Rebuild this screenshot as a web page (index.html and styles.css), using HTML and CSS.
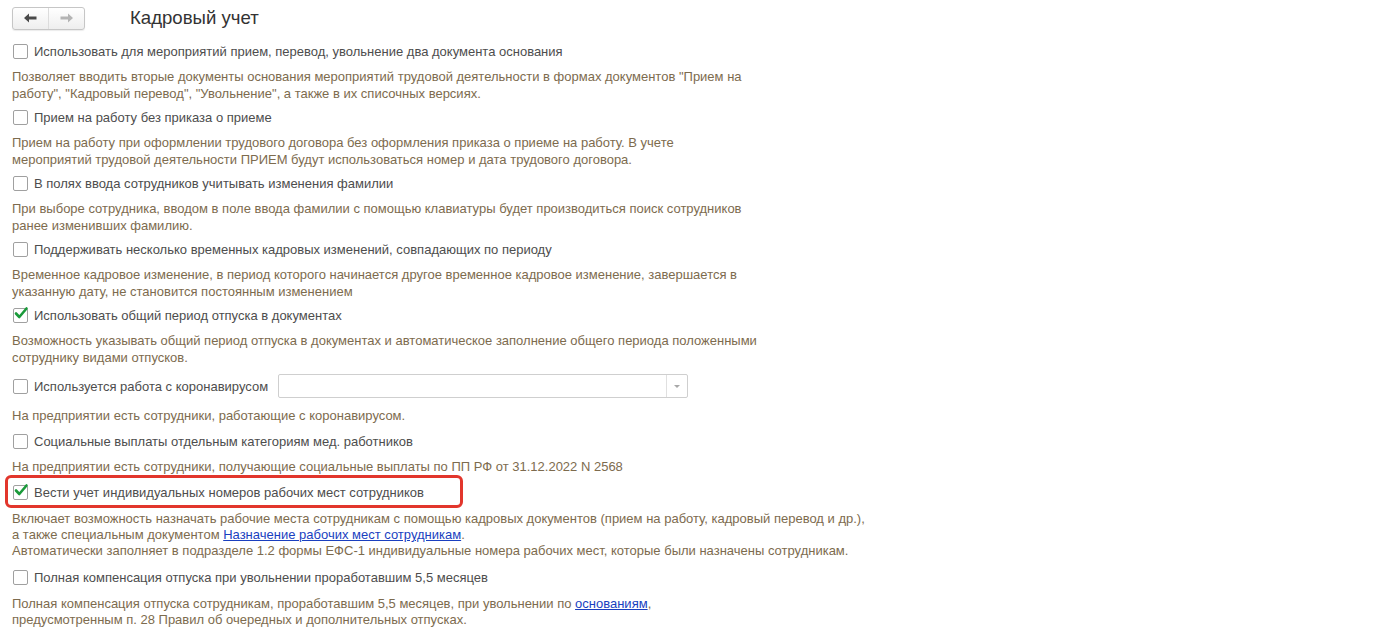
FILE: index.html
```html
<!DOCTYPE html>
<html>
<head>
    <title>Кадровый учет</title>
    <link rel="stylesheet" href="styles.css">
</head>
<body>
    <div class="page">
        <div class="header">
            <div class="nav">
                <button class="nav-btn back" type="button">
                    <svg width="13" height="10" viewBox="0 0 13 10"><path d="M0 5 L5 0.5 L5 3.5 L12.5 3.5 L12.5 6.5 L5 6.5 L5 9.5 Z" fill="#4a4a4a"/></svg>
                </button>
                <button class="nav-btn fwd" type="button">
                    <svg width="13" height="10" viewBox="0 0 13 10"><path d="M13 5 L8 0.5 L8 3.5 L0.5 3.5 L0.5 6.5 L8 6.5 L8 9.5 Z" fill="#b4b4b4"/></svg>
                </button>
            </div>
            <h1>Кадровый учет</h1>
        </div>

        <div class="option">
            <label class="check-row"><span class="box"></span>Использовать для мероприятий прием, перевод, увольнение два документа основания</label>
            <div class="desc">Позволяет вводить вторые документы основания мероприятий трудовой деятельности в формах документов "Прием на<br>работу", "Кадровый перевод", "Увольнение", а также в их списочных версиях.</div>
        </div>

        <div class="option">
            <label class="check-row"><span class="box"></span>Прием на работу без приказа о приеме</label>
            <div class="desc">Прием на работу при оформлении трудового договора без оформления приказа о приеме на работу. В учете<br>мероприятий трудовой деятельности ПРИЕМ будут использоваться номер и дата трудового договора.</div>
        </div>

        <div class="option">
            <label class="check-row"><span class="box"></span>В полях ввода сотрудников учитывать изменения фамилии</label>
            <div class="desc">При выборе сотрудника, вводом в поле ввода фамилии с помощью клавиатуры будет производиться поиск сотрудников<br>ранее изменивших фамилию.</div>
        </div>

        <div class="option">
            <label class="check-row"><span class="box"></span>Поддерживать несколько временных кадровых изменений, совпадающих по периоду</label>
            <div class="desc">Временное кадровое изменение, в период которого начинается другое временное кадровое изменение, завершается в<br>указанную дату, не становится постоянным изменением</div>
        </div>

        <div class="option">
            <label class="check-row"><span class="box checked"><svg width="16" height="16" viewBox="0 0 16 16"><path d="M3 7.5 L6.3 11 L13.5 2.5" fill="none" stroke="#1a9a3a" stroke-width="2.6" stroke-linecap="round" stroke-linejoin="round"/></svg></span>Использовать общий период отпуска в документах</label>
            <div class="desc">Возможность указывать общий период отпуска в документах и автоматическое заполнение общего периода положенными<br>сотруднику видами отпусков.</div>
        </div>

        <div class="option with-combo">
            <div class="check-row tall">
                <label class="check-label"><span class="box"></span>Используется работа с коронавирусом</label>
                <div class="combo">
                    <div class="combo-field"></div>
                    <div class="combo-btn"><span class="tri"></span></div>
                </div>
            </div>
            <div class="desc loose">На предприятии есть сотрудники, работающие с коронавирусом.</div>
        </div>

        <div class="option after-combo">
            <label class="check-row"><span class="box"></span>Социальные выплаты отдельным категориям мед. работников</label>
            <div class="desc">На предприятии есть сотрудники, получающие социальные выплаты по ПП РФ от 31.12.2022 N 2568</div>
        </div>

        <div class="option spaced">
            <label class="check-row marked"><span class="box checked"><svg width="16" height="16" viewBox="0 0 16 16"><path d="M3 7.5 L6.3 11 L13.5 2.5" fill="none" stroke="#1a9a3a" stroke-width="2.6" stroke-linecap="round" stroke-linejoin="round"/></svg></span>Вести учет индивидуальных номеров рабочих мест сотрудников</label>
            <div class="desc tight">Включает возможность назначать рабочие места сотрудникам с помощью кадровых документов (прием на работу, кадровый перевод и др.),<br>а также специальным документом <a href="#">Назначение рабочих мест сотрудникам</a>.<br>Автоматически заполняет в подразделе 1.2 формы ЕФС-1 индивидуальные номера рабочих мест, которые были назначены сотрудникам.</div>
        </div>

        <div class="option last">
            <label class="check-row"><span class="box"></span>Полная компенсация отпуска при увольнении проработавшим 5,5 месяцев</label>
            <div class="desc tight">Полная компенсация отпуска сотрудникам, проработавшим 5,5 месяцев, при увольнении по <a href="#">основаниям</a>,<br>предусмотренным п. 28 Правил об очередных и дополнительных отпусках.</div>
        </div>
    </div>
</body>
</html>
```

FILE: styles.css
```css
body {
    margin: 0;
    background: #fff;
    font-family: Arial, "Liberation Sans", sans-serif;
    font-size: 13px;
    color: #4d4d4d;
}
.page {
    padding: 6px 12px 0 12px;
}
.header {
    display: flex;
    align-items: center;
    height: 24px;
}
.nav {
    display: flex;
    width: 73px;
    height: 23px;
    border: 1px solid #c6c6c6;
    border-radius: 3px;
    box-sizing: border-box;
    background: linear-gradient(#ffffff, #eeeeee);
    box-shadow: 0 1px 1px rgba(0, 0, 0, 0.08);
}
.nav-btn {
    flex: 1;
    display: flex;
    align-items: center;
    justify-content: center;
    padding: 0;
    border: none;
    background: transparent;
}
.nav-btn.back {
    border-right: 1px solid #dcdcdc;
}
h1 {
    margin: 0 0 0 45px;
    font-size: 18.6px;
    font-weight: normal;
    color: #333;
    line-height: 24px;
}
.option {
    margin-top: 11px;
}
.option + .option {
    margin-top: 5px;
}
.option.with-combo {
    margin-top: 8px;
}
.option.after-combo {
    margin-top: 7px;
}
.option.spaced {
    margin-top: 7px;
}
.option.last {
    margin-top: 8px;
}
.check-row {
    position: relative;
    display: flex;
    align-items: center;
    height: 20px;
    color: #4d4d4d;
}
.check-row.tall {
    height: 24px;
}
.check-label {
    display: flex;
    align-items: center;
}
.box {
    position: relative;
    width: 13px;
    height: 13px;
    margin: 0 6px 0 1px;
    border: 1px solid #a0a0a0;
    border-radius: 2px;
    background: #fff;
    flex-shrink: 0;
}
.box svg {
    position: absolute;
    left: -1px;
    top: -3px;
}
.desc {
    margin-top: 7px;
    line-height: 17px;
    color: #7d6b4e;
}
.desc.loose {
    margin-top: 9px;
}
.desc.tight {
    margin-top: 9px;
    line-height: 16px;
}
.desc a {
    color: #1a3fbf;
}
.combo {
    display: flex;
    width: 410px;
    height: 24px;
    margin-left: 10px;
    border: 1px solid #cfcfcf;
    border-radius: 2px;
    box-sizing: border-box;
}
.combo-field {
    flex: 1;
}
.combo-btn {
    width: 20px;
    border-left: 1px solid #e0e0e0;
    display: flex;
    align-items: center;
    justify-content: center;
}
.tri {
    width: 0;
    height: 0;
    border-left: 3px solid transparent;
    border-right: 3px solid transparent;
    border-top: 3px solid #a8a8a8;
}
.marked::after {
    content: "";
    position: absolute;
    left: -7px;
    top: -7px;
    width: 458px;
    height: 33px;
    box-sizing: border-box;
    border: 3px solid #e2362c;
    border-radius: 6px;
    pointer-events: none;
}
```
